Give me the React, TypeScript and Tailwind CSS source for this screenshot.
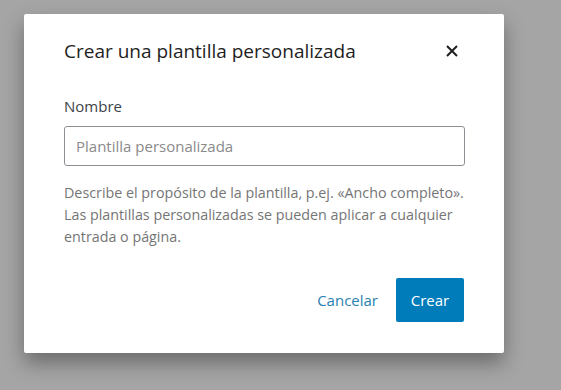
export default function App() {
  return (
    <div className="min-h-[390px] w-full bg-[#a5a5a5] pl-[24px] pt-[14px] font-['Open_Sans',sans-serif]">
      <div className="flex w-[480px] flex-col rounded-[2px] bg-white px-[40px] pb-[31px] pt-[23px] shadow-[0_10px_20px_rgba(0,0,0,0.35)]">
        <div className="flex h-[28px] items-center justify-between">
          <h1 className="text-[19px] leading-[28px] text-[#1e1e1e]">Crear una plantilla personalizada</h1>
          <svg width="14" height="14" viewBox="0 0 14 14" className="mr-[5px]">
            <path d="M2 2L12 12M12 2L2 12" stroke="#1e1e1e" strokeWidth="2" />
          </svg>
        </div>
        <label className="mt-[31px] text-[15px] leading-[20px] text-[#3c434a]">Nombre</label>
        <input
          className="mt-[10px] h-[40px] w-[401px] rounded-[3px] border border-[#8c8f94] px-[11px] text-[15px] outline-none placeholder:text-[#8a8a8a]"
          placeholder="Plantilla personalizada"
        />
        <p className="mt-[16px] text-[14.3px] leading-[22px] text-[#757575]">
          Describe el propósito de la plantilla, p.ej. «Ancho completo».
          <br />
          Las plantillas personalizadas se pueden aplicar a cualquier
          <br />
          entrada o página.
        </p>
        <div className="mt-[30px] flex items-center justify-end gap-[18px]">
          <button className="text-[15px] text-[#2a7fb0]">Cancelar</button>
          <button className="h-[44px] w-[68px] rounded-[2px] bg-[#007cba] text-[15px] text-white">Crear</button>
        </div>
      </div>
    </div>
  );
}
